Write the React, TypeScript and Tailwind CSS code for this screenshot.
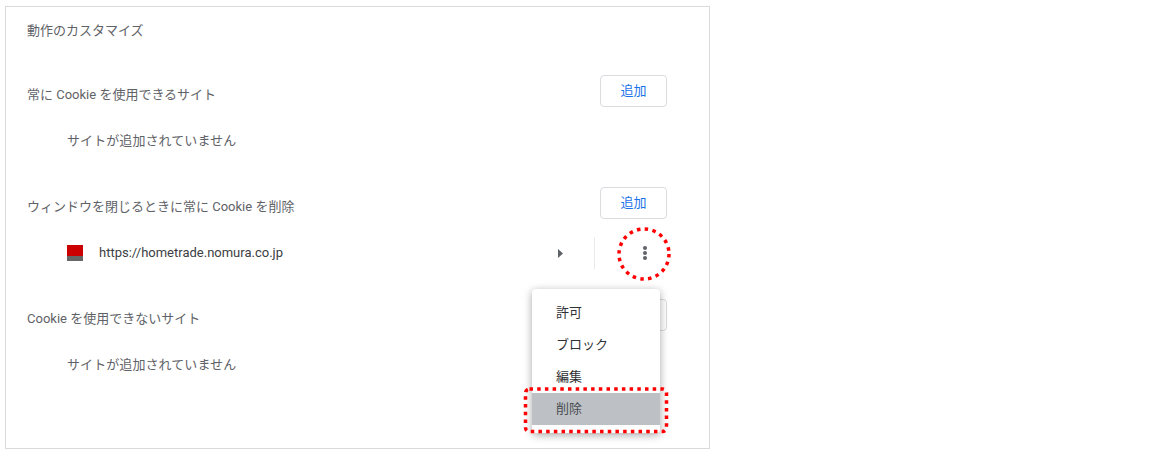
const AddButton = () => (
  <button className="w-[67px] h-[32px] rounded border border-[#dadce0] bg-white text-[13px] pb-[1px] text-[#1a73e8]">
    追加
  </button>
);

const Heading = ({ label }: { label: string }) => (
  <div className="flex items-center justify-between h-[32px] pr-[42px]">
    <span className="mt-[7px] text-[13px] text-[#5f6368]">{label}</span>
    <AddButton />
  </div>
);

const EmptyNote = () => (
  <div className="pl-[40px] pt-[2px] mt-[17px] h-[32px] flex items-center text-[13px] tracking-[0.08px] text-[#5f6368]">
    サイトが追加されていません
  </div>
);

const MenuItem = ({ label, active }: { label: string; active?: boolean }) => (
  <div className={`h-[32px] flex items-center pl-[24px] text-[13px] ${active ? "bg-[#bdc1c6] text-[#4a4d51]" : "text-[#303134]"}`}>
    {label}
  </div>
);

export default function App() {
  return (
    <div className="relative w-[1164px] h-[458px] bg-white overflow-hidden" style={{ fontFamily: 'Roboto, "Noto Sans CJK JP", sans-serif' }}>
      <div className="ml-[5px] w-[705px] h-[449px] pt-[6px]">
        <div className="h-[443px] border border-[#dadada] pl-[21px] flex flex-col">
          <div className="h-[46px] pt-[2px] flex items-center text-[13px] text-[#5f6368]">動作のカスタマイズ</div>
          <div className="mt-[22px]"><Heading label="常に Cookie を使用できるサイト" /></div>
          <EmptyNote />
          <div className="mt-[31px]"><Heading label="ウィンドウを閉じるときに常に Cookie を削除" /></div>
          <div className="mt-[17px] h-[32px] flex items-center pl-[40px] pr-[42px]">
            <div className="w-[16px] h-[16px] mt-[2px] flex flex-col">
              <div className="h-[11px] bg-[#cc0000]" />
              <div className="h-[5px] bg-[#666666]" />
            </div>
            <span className="ml-[16px] mt-[2px] text-[13px] text-[#3c4043] flex-1">https://hometrade.nomura.co.jp</span>
            <svg width="5" height="9" viewBox="0 0 5 9" className="mt-[2px] mr-[31px]"><path d="M0 0l5 4.5-5 4.5z" fill="#5f6368" /></svg>
            <div className="w-px h-[32px] mt-[2px] bg-[#e8eaed]" />
            <div className="w-[72px] pl-[48px] mt-[2px] flex flex-col gap-[1.5px]">
              <div className="w-[3.5px] h-[3.5px] rounded-full bg-[#5f6368]" />
              <div className="w-[3.5px] h-[3.5px] rounded-full bg-[#5f6368]" />
              <div className="w-[3.5px] h-[3.5px] rounded-full bg-[#5f6368]" />
            </div>
          </div>
          <div className="mt-[31px]"><Heading label="Cookie を使用できないサイト" /></div>
          <EmptyNote />
        </div>
      </div>

      <div className="absolute left-[532px] top-[289px] w-[128px] rounded bg-white py-[8px] shadow-[0_2px_8px_rgba(0,0,0,0.35)]">
        <MenuItem label="許可" />
        <MenuItem label="ブロック" />
        <MenuItem label="編集" />
        <MenuItem label="削除" active />
      </div>

      {/* red dotted annotations */}
      <svg className="absolute left-0 top-0 pointer-events-none" width="1164" height="458">
        <circle cx="644" cy="254" r="25" fill="none" stroke="#ff0000" strokeWidth="3.5" strokeDasharray="3.5 4.35" />
        <rect x="525.5" y="389" width="141" height="42.5" rx="4" fill="none" stroke="#ff0000" strokeWidth="3.5" strokeDasharray="3.5 4.2" />
      </svg>
    </div>
  );
}
